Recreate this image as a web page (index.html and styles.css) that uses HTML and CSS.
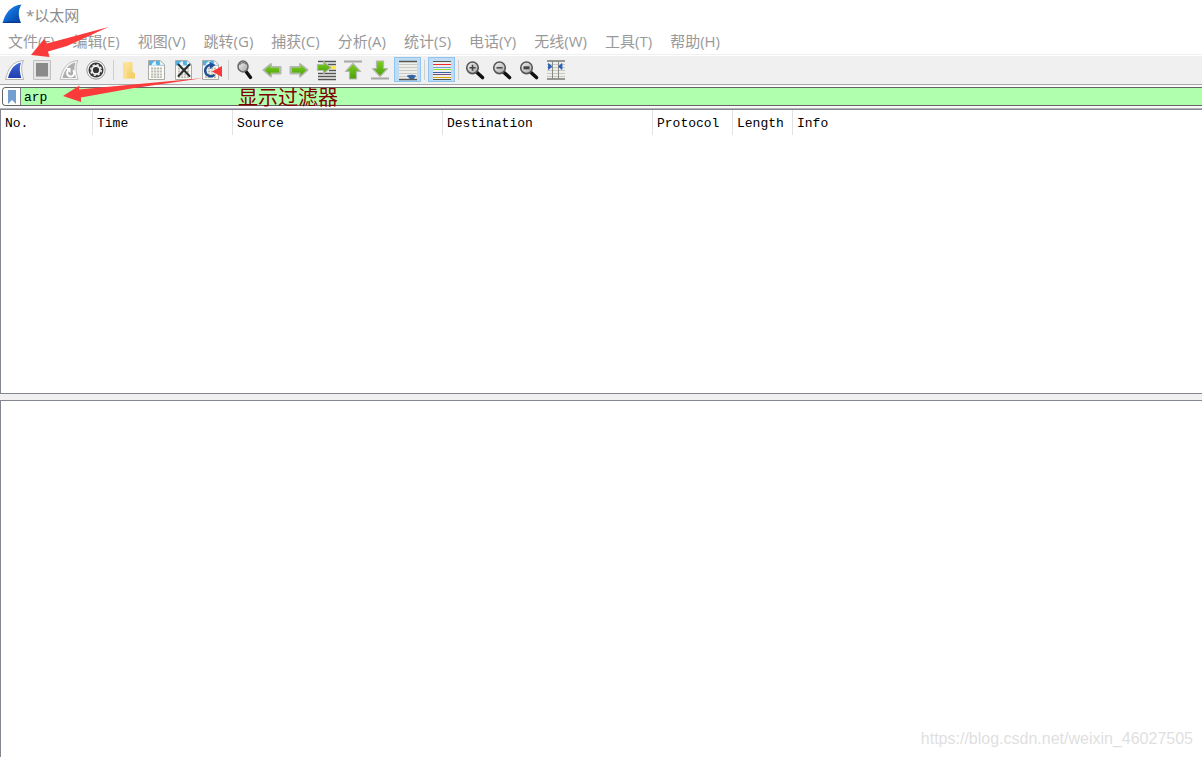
FILE: index.html
```
<!DOCTYPE html>
<html lang="zh-CN">
<head>
<meta charset="utf-8">
<title>*以太网</title>
<link rel="stylesheet" href="styles.css">
</head>
<body>
<svg class="defs" aria-hidden="true">
  <defs>
    <linearGradient id="fin" x1="0" y1="0" x2="1" y2="1"><stop offset="0" stop-color="#3f9cf0"/><stop offset=".5" stop-color="#0d66d0"/><stop offset="1" stop-color="#063a92"/></linearGradient>
    <linearGradient id="finStart" x1="0" y1="0" x2="0" y2="1"><stop offset="0" stop-color="#3f68d8"/><stop offset="1" stop-color="#1f3fae"/></linearGradient>
    <linearGradient id="green" x1="0" y1="0" x2="0" y2="1"><stop offset="0" stop-color="#7fd021"/><stop offset="1" stop-color="#48a008"/></linearGradient>
    <linearGradient id="lens" x1="0" y1="0" x2="1" y2="1"><stop offset="0" stop-color="#f4f4f4"/><stop offset="1" stop-color="#a5a5a5"/></linearGradient>
    <linearGradient id="folder" x1="0" y1="0" x2="1" y2="1"><stop offset="0" stop-color="#ffeaa3"/><stop offset="1" stop-color="#f2c95a"/></linearGradient>
    <symbol id="sheet" viewBox="0 0 27 25">
      <path d="M4.500 3.500h12l4 4v15h-16z" fill="#fbfbf4" stroke="#a9aaa7"/>
      <path d="M5 4h11.500l3.500 3.500v1H5z" fill="#52b0e4"/>
      <path d="M7.500 8.500c.5-2.500 2-4 4.500-4.500-.5 2 0 3 1 4.500z" fill="#e4f4fc"/>
      <path d="M16 3.500V8h4.500z" fill="#fff" stroke="#b7c7ce" stroke-width=".6"/>
      <path d="M7 11.500h11M7 14.500h11M7 17.500h11M7 20.200h11" stroke="#bcbdb5" stroke-width="1.800" stroke-dasharray="2.200 .7"/>
    </symbol>
    <symbol id="magnifier" viewBox="0 0 27 25">
      <path d="M15 15.500l5.500 5" stroke="#111" stroke-width="3.600" stroke-linecap="round"/>
      <circle cx="10.500" cy="10.800" r="5.800" fill="url(#lens)" stroke="#555" stroke-width="1.600"/>
    </symbol>
    <symbol id="arrow" viewBox="0 0 27 25">
      <path d="M4.500 13l7.500-6v3h9.500v6.500H12v3z" fill="#fff" stroke="#b5b8b1" stroke-width="2" stroke-linejoin="round"/>
      <path d="M5.500 13l6-5v2.800h9v4.900h-9v2.800z" fill="url(#green)"/>
    </symbol>
  </defs>
</svg>

<header class="titlebar">
  <svg class="logo" viewBox="0 0 20 20" aria-hidden="true"><path d="M.5 19C3.500 9 8 2 19.500.5c-3.500 5-3.500 11-.5 18.500z" fill="url(#fin)"/><path d="M.5 19c4-2 11-2 18.500 0z" fill="#08398b"/></svg>
  <span>*以太网</span>
</header>

<nav class="menubar">
  <button>文件(F)</button><button>编辑(E)</button><button>视图(V)</button><button>跳转(G)</button><button>捕获(C)</button><button>分析(A)</button><button>统计(S)</button><button>电话(Y)</button><button>无线(W)</button><button>工具(T)</button><button>帮助(H)</button>
</nav>

<div class="toolbar" role="toolbar">
  <button aria-label="开始捕获"><svg viewBox="0 0 27 25"><path d="M3.500 22.500C6 12 10 4.500 21.500 3.500c-2.500 5-2.500 11 .2 19z" fill="#fff" stroke="#b4b4b4"/><path d="M6 21C8 13 12 7 19 5.500c-1.800 5-1.500 10 .4 15.500z" fill="url(#finStart)"/></svg></button>
  <button aria-label="停止捕获"><svg viewBox="0 0 27 25"><path d="M4.500 3.500h17v19h-17z" fill="#e6e6e6" stroke="#c0c0c0"/><path d="M7 6h12v13.500H7z" fill="#8a8a8a"/></svg></button>
  <button aria-label="重新开始捕获"><svg viewBox="0 0 27 25"><path d="M4 22.500C6.500 12 10.500 4.500 22 3.500c-2.500 5-2.500 11 .2 19z" fill="#f5f5f5" stroke="#c0c0c0"/><path d="M6.500 21C8.500 13 12.500 7 19.500 5.500c-1.800 5-1.500 10 .4 15.500z" fill="#adadad"/><path d="M17 13.200a3.600 3.600 0 1 1-5 .3" fill="none" stroke="#fff" stroke-width="2"/><path d="M9.500 11h5v5z" fill="#fff"/></svg></button>
  <button aria-label="捕获选项"><svg viewBox="0 0 27 25"><circle cx="13" cy="13" r="9.200" fill="#f5f5f5" stroke="#999"/><circle cx="13" cy="13" r="7.500" fill="#383838"/><circle cx="13" cy="13" r="4" fill="none" stroke="#eee" stroke-width="1.800"/><circle cx="13" cy="13" r="5.300" fill="none" stroke="#eee" stroke-width="1.400" stroke-dasharray="2.200 1.960"/><circle cx="13" cy="13" r="2.600" fill="#333"/></svg></button>
  <span class="sep"></span>
  <button aria-label="打开文件"><svg viewBox="0 0 27 25"><path d="M6 5h9.500v10.500l2.500 1.500v4.500H6z" fill="url(#folder)"/><path d="M6 5.500l3.500 2v15L6 20.500z" fill="#fbe092"/><path d="M15.500 15l2.500 1.500v4.500h-3.500V16z" fill="#f4cf6b"/></svg></button>
  <button aria-label="保存文件"><svg viewBox="0 0 27 25"><use href="#sheet"/></svg></button>
  <button aria-label="关闭文件"><svg viewBox="0 0 27 25"><use href="#sheet"/><path d="M7.500 7.500l11 11.500M18.500 7.500L7.500 19" stroke="#2a2e30" stroke-width="2" stroke-linecap="round"/></svg></button>
  <button aria-label="重新加载文件"><svg viewBox="0 0 27 25"><use href="#sheet"/><path d="M16.500 17.800a5.600 5.600 0 1 1-2.500-9.600" fill="none" stroke="#214f98" stroke-width="2.400"/><path d="M11.500 5l6 3-5.500 4z" fill="#214f98"/><path d="M14 14.500l10-5.500v11z" fill="#fb3838"/></svg></button>
  <span class="sep"></span>
  <button aria-label="查找分组"><svg viewBox="0 0 27 25"><path d="M14 14.500l4.500 6" stroke="#111" stroke-width="3.400" stroke-linecap="round"/><ellipse cx="11" cy="9.500" rx="5" ry="5.400" fill="url(#lens)" stroke="#666" stroke-width="1.500"/><path d="M7.500 8C9 5 13 5 14.500 7.500" fill="none" stroke="#777" stroke-width="1.200"/></svg></button>
  <button aria-label="上一分组"><svg viewBox="0 0 27 25"><use href="#arrow"/></svg></button>
  <button aria-label="下一分组"><svg viewBox="0 0 27 25"><g transform="matrix(-1 0 0 1 26 0)"><use href="#arrow"/></g></svg></button>
  <button aria-label="转到分组"><svg viewBox="0 0 27 25"><path d="M5 4.500h18M5 16.500h18M5 19.500h18M5 22.500h18M15 7.500h8M16 13.500h7" stroke="#555753" stroke-width="1.300"/><path d="M17 10.500h6" stroke="#fce94f" stroke-width="3"/><path d="M4.500 7.500h6V4.500l7.500 6-7.500 6v-3h-6z" fill="url(#green)" stroke="#b5b8b1" stroke-width="1.200" stroke-linejoin="round"/></svg></button>
  <button aria-label="第一个分组"><svg viewBox="0 0 27 25"><path d="M4 4.500h18" stroke="#a6a8a4" stroke-width="2"/><path d="M13 6.500l7.500 8H16.500v7.500h-7v-7.500h-4z" fill="url(#green)" stroke="#b5b8b1" stroke-width="1.200" stroke-linejoin="round"/></svg></button>
  <button aria-label="最后一个分组"><svg viewBox="0 0 27 25"><path d="M4 21.500h18" stroke="#a6a8a4" stroke-width="2"/><path d="M13 19.500l7.500-8H16.500V4h-7v7.500h-4z" fill="url(#green)" stroke="#b5b8b1" stroke-width="1.200" stroke-linejoin="round"/></svg></button>
  <button class="checked" aria-pressed="true" aria-label="自动滚动"><svg viewBox="0 0 27 25"><path d="M5 4h18v19H5z" fill="#eeeeec"/><path d="M5 4.500h18M5 22.500h18" stroke="#555753" stroke-width="1.500"/><path d="M5 7.500h18M5 10.500h18M5 13.500h18M5 16.500h18M5 19.500h18" stroke="#c9cbc3"/><path d="M13 18.500c3-1 6-1 9 0 0 2-2 1.500-2 3.500h-4.500c0-2-2.500-1.500-2.500-3.500z" fill="#3465a4"/></svg></button>
  <span class="sep"></span>
  <button class="checked" aria-pressed="true" aria-label="着色分组"><svg viewBox="0 0 27 25"><path d="M5 4h18v19H5z" fill="#eeeeec"/><path d="M5 4.500h18M5 22.500h18" stroke="#555753" stroke-width="1.200"/><path d="M5 7.500h18" stroke="#ef2929"/><path d="M5 10.500h18" stroke="#729fcf"/><path d="M5 12.500h18" stroke="#8ae234"/><path d="M5 15.500h18" stroke="#3465a4"/><path d="M5 17.500h18" stroke="#75507b"/><path d="M5 20.500h18" stroke="#d9a600"/></svg></button>
  <span class="sep"></span>
  <button aria-label="放大"><svg viewBox="0 0 27 25"><use href="#magnifier"/><path d="M7.500 10.800h6M10.500 7.800v6" stroke="#444" stroke-width="1.500"/></svg></button>
  <button aria-label="缩小"><svg viewBox="0 0 27 25"><use href="#magnifier"/><path d="M7.500 10.800h6" stroke="#444" stroke-width="1.500"/></svg></button>
  <button aria-label="正常大小"><svg viewBox="0 0 27 25"><use href="#magnifier"/><path d="M7.500 10.800h6" stroke="#444" stroke-width="3"/></svg></button>
  <button aria-label="调整列宽"><svg viewBox="0 0 27 25"><path d="M4 4h18v18H4z" fill="#eeeeec"/><path d="M4 7.500h18M4 10.500h18M4 13.500h18M4 16.500h18M4 19.500h18" stroke="#c9cbc3"/><path d="M4 4h18M4 22h18" stroke="#777974" stroke-width="1.300"/><path d="M9.500 4v18M15.500 4v18" stroke="#888a85"/><path d="M5.500 6.500l3.500 3-3.500 3zM19 6.500l-3.500 3 3.500 3z" fill="#2461b8" stroke="#2461b8" stroke-width=".8"/></svg></button>
</div>

<div class="filterbar">
  <div class="filter">
    <button class="bookmark" aria-label="书签"><svg viewBox="0 0 8 14"><path d="M0 0h8v14l-4-4-4 4z" fill="#729fcf"/></svg></button>
    <input class="filter-input" type="text" value="arp" aria-label="显示过滤器" spellcheck="false">
  </div>
  <span class="note">显示过滤器</span>
</div>

<main class="panes">
  <section class="packet-list">
    <table>
      <thead><tr><th class="c-no">No.</th><th class="c-time">Time</th><th class="c-addr">Source</th><th class="c-addr">Destination</th><th class="c-proto">Protocol</th><th class="c-len">Length</th><th>Info</th></tr></thead>
    </table>
  </section>
  <section class="details"><span class="watermark">https://blog.csdn.net/weixin_46027505</span></section>
</main>

<svg class="arrows" viewBox="0 0 220 110" aria-hidden="true">
  <path d="M108.500 27L47 43.500l-3-4.500L31 55l18.500 2-1.500-5.500L67 46z" fill="#fb3b3b"/>
  <path d="M204 78L79 89.500l.5-4L63 96l18 6v-4.500l50-9z" fill="#fb3b3b"/>
</svg>
</body>
</html>
```
FILE: styles.css
```
* { box-sizing: border-box; }

body {
  margin: 0;
  min-height: 100vh;
  display: flex;
  flex-direction: column;
  background: #fff;
  font-family: "Open Sans", "Noto Sans CJK SC", sans-serif;
  font-size: 15px;
  color: #999;
}

button {
  margin: 0;
  padding: 0;
  border: 0;
  background: none;
  font: inherit;
  color: inherit;
}

.defs {
  position: absolute;
  width: 0;
  height: 0;
}

.titlebar {
  display: flex;
  align-items: center;
  gap: 4px;
  height: 28px;
  padding-left: 2px;
  color: #8c8c8c;
}

.logo {
  width: 20px;
  height: 20px;
}

.menubar {
  display: flex;
  gap: 2px;
  height: 27px;
  border-bottom: 1px solid #f0f0f0;
}

.menubar button {
  padding: 0 8px;
  line-height: 26px;
  white-space: nowrap;
}

.toolbar {
  display: flex;
  align-items: center;
  height: 29px;
  margin-top: 1px;
  padding: 0 2px 1px;
  background: #f0f0f0;
  border-bottom: 1px solid #a8a8a8;
}

.toolbar button {
  width: 27px;
  height: 25px;
}

.toolbar svg {
  display: block;
  width: 27px;
  height: 25px;
}

.toolbar .checked {
  background: #bfdcf3;
  box-shadow: inset 0 0 0 1px #8fc5f0;
}

.sep {
  width: 7px;
  height: 20px;
  background: linear-gradient(#cfcfcf, #cfcfcf) 3px 0 / 1px 100% no-repeat;
}

.filterbar {
  position: relative;
  padding: 2px 0 2px 2px;
  background: #fafafa;
  border-bottom: 1px solid #b4b4b8;
}

.filter {
  display: flex;
  height: 19px;
  border: 1px solid #646464;
  border-right: 0;
  border-radius: 4px 0 0 4px;
  background: #afffaf;
  overflow: hidden;
}

.bookmark {
  display: flex;
  align-items: center;
  justify-content: center;
  width: 18px;
  background: #fff;
  border-right: 1px solid #808080;
}

.bookmark svg {
  width: 8px;
  height: 14px;
}

.filter-input {
  flex: 1;
  min-width: 0;
  padding: 1px 3px 0;
  border: 0;
  outline: 0;
  background: none;
  color: #000;
  font: 13px "Liberation Mono", monospace;
}

.note {
  position: absolute;
  left: 238px;
  top: 1px;
  font-size: 20px;
  line-height: 24px;
  color: #800000;
}

.panes {
  flex: 1;
  display: flex;
  flex-direction: column;
  gap: 6px;
  background: #f0f0f0;
}

.packet-list,
.details {
  background: #fff;
  border-top: 1px solid #828790;
  border-left: 1px solid #828790;
}

.packet-list {
  flex: 284 1 0;
  border-bottom: 1px solid #828790;
}

.details {
  flex: 358 1 0;
  display: flex;
  align-items: flex-end;
  justify-content: flex-end;
}

table {
  width: 100%;
  table-layout: fixed;
  border-collapse: separate;
  border-spacing: 0;
}

th {
  height: 25px;
  padding: 1px 4px 0;
  border-right: 1px solid #e2e2e2;
  text-align: left;
  white-space: nowrap;
  font: 13px "Liberation Mono", monospace;
  color: #000;
}

th:last-child { border-right: 0; }

.c-no { width: 92px; }
.c-time { width: 140px; }
.c-addr { width: 210px; }
.c-proto { width: 80px; }
.c-len { width: 60px; }

.watermark {
  padding: 0 9px 9px;
  font: 16px "Liberation Sans", sans-serif;
  color: #dfdfdf;
}

.arrows {
  position: absolute;
  left: 0;
  top: 0;
  width: 220px;
  height: 110px;
  pointer-events: none;
}
```
